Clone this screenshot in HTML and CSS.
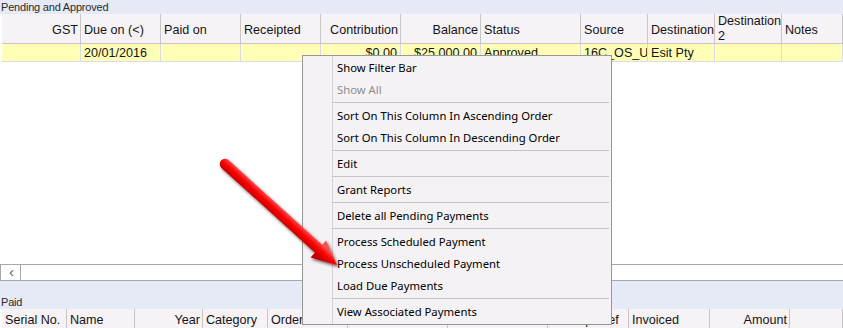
FILE: index.html
```html
<!DOCTYPE html>
<html lang="en">
<head>
    <meta charset="UTF-8">
    <title>Payments</title>
    <link rel="stylesheet" href="styles.css">
</head>
<body>
    <div class="caption">Pending and Approved</div>

    <div class="grid pending">
        <div class="head top-cols">
            <div class="c r">GST</div>
            <div class="c">Due on (&lt;)</div>
            <div class="c">Paid on</div>
            <div class="c">Receipted</div>
            <div class="c r">Contribution</div>
            <div class="c r">Balance</div>
            <div class="c">Status</div>
            <div class="c">Source</div>
            <div class="c">Destination</div>
            <div class="c two">Destination<br>2</div>
            <div class="c">Notes</div>
        </div>
        <div class="row top-cols">
            <div class="c"></div>
            <div class="c">20/01/2016</div>
            <div class="c"></div>
            <div class="c"></div>
            <div class="c r">$0.00</div>
            <div class="c r">$25,000.00</div>
            <div class="c">Approved</div>
            <div class="c">16C_OS_University</div>
            <div class="c">Esit Pty</div>
            <div class="c"></div>
            <div class="c"></div>
        </div>
        <div class="blank"></div>
        <div class="hscroll">
            <span class="scroll-btn">&lsaquo;</span>
        </div>
    </div>

    <div class="band"></div>
    <div class="caption">Paid</div>

    <div class="grid">
        <div class="head paid-cols">
            <div class="c">Serial No.</div>
            <div class="c">Name</div>
            <div class="c r">Year</div>
            <div class="c">Category</div>
            <div class="c">Order</div>
            <div class="c"></div>
            <div class="c"></div>
            <div class="c ref">Receipt Ref</div>
            <div class="c">Invoiced</div>
            <div class="c r">Amount</div>
            <div class="c"></div>
        </div>
    </div>

    <!-- context menu -->
    <ul class="menu">
        <li>Show Filter Bar</li>
        <li class="off">Show All</li>
        <li class="sep"></li>
        <li>Sort On This Column In Ascending Order</li>
        <li>Sort On This Column In Descending Order</li>
        <li class="sep"></li>
        <li>Edit</li>
        <li class="sep"></li>
        <li>Grant Reports</li>
        <li class="sep"></li>
        <li>Delete all Pending Payments</li>
        <li class="sep"></li>
        <li>Process Scheduled Payment</li>
        <li>Process Unscheduled Payment</li>
        <li>Load Due Payments</li>
        <li class="sep"></li>
        <li>View Associated Payments</li>
    </ul>

    <svg class="pointer" width="843" height="328" viewBox="0 0 843 328">
        <defs>
            <linearGradient id="red" gradientUnits="userSpaceOnUse" x1="274" y1="200.6" x2="266" y2="209.4">
                <stop offset="0" stop-color="#ff5050"/>
                <stop offset="0.45" stop-color="#ff0000"/>
                <stop offset="1" stop-color="#c00000"/>
            </linearGradient>
            <filter id="shadow" x="-20%" y="-20%" width="140%" height="140%">
                <feDropShadow dx="1.5" dy="2" stdDeviation="1.6" flood-color="#300" flood-opacity="0.65"/>
            </filter>
        </defs>
        <g filter="url(#shadow)" fill="url(#red)">
            <line x1="225" y1="164" x2="320" y2="250" stroke="url(#red)" stroke-width="10.5" stroke-linecap="round"/>
            <polygon points="337,265 310.5,257.5 326,240.5"/>
        </g>
    </svg>
</body>
</html>
```

FILE: styles.css
```css
body {
    margin: 0;
    width: 843px;
    height: 328px;
    overflow: hidden;
    position: relative;
    background: #e6eaf6;
    font-family: "Liberation Sans", Arial, sans-serif;
    color: #151515;
}
.caption {
    height: 14px;
    line-height: 14px;
    padding-left: 1px;
    font-size: 11px;
    letter-spacing: -0.2px;
    color: #2a2a2a;
    overflow: hidden;
}
.grid {
    background: #fff;
    padding-left: 2px;
}
.pending {
    height: 267px;
    display: flex;
    flex-direction: column;
}
.top-cols {
    display: grid;
    grid-template-columns: 79px 80px 80px 80px 80px 80px 100px 67px 67px 67px 1fr;
}
.paid-cols {
    display: grid;
    grid-template-columns: 65px 68px 68px 65px 80px 100px 100px 81px 81px 80px 1fr;
}
.c {
    box-sizing: border-box;
    padding: 0 3px;
    font-size: 12.6px;
    white-space: nowrap;
    overflow: hidden;
}
.head {
    height: 30px;
    background: #f6f2f6;
    border-bottom: 1px solid #c8c4c8;
    box-sizing: border-box;
}
.paid-cols.head {
    height: 20px;
}
.head .c {
    display: flex;
    align-items: center;
    padding-top: 2px;
    border-right: 1px solid #c8c4c8;
}
.head .c.r {
    justify-content: flex-end;
    padding-right: 2px;
}
.head .c.ref {
    padding-left: 5px;
}
.head .c.two {
    line-height: 15px;
    padding-top: 0;
}
.row {
    height: 18px;
    background: #ffffb5;
    border-bottom: 1px solid #dadde7;
    box-sizing: border-box;
}
.row .c {
    line-height: 18px;
    border-right: 1px solid #dadde7;
}
.row .c.r {
    text-align: right;
    padding-right: 3px;
}
.blank {
    flex: 1;
}
.hscroll {
    height: 17px;
    box-sizing: border-box;
    border-top: 1px solid #a8a8a8;
    border-bottom: 1px solid #a8a8a8;
    border-left: 1px solid #a8a8a8;
    margin-left: -2px;
    display: flex;
}
.scroll-btn {
    width: 18px;
    box-sizing: border-box;
    border-right: 1px solid #a8a8a8;
    margin-left: 2px;
    text-align: center;
    line-height: 13px;
    font-size: 15px;
    color: #606060;
}
.band {
    height: 14px;
}
.menu {
    position: absolute;
    left: 302px;
    top: 55px;
    width: 310px;
    margin: 0;
    padding: 1px 0;
    list-style: none;
    box-sizing: border-box;
    border: 1px solid #979797;
    background: linear-gradient(to right, transparent 29px, #d4d0d4 29px, #d4d0d4 30px, transparent 30px), #f5f2f5;
    font-family: "Noto Sans", sans-serif;
    font-size: 11.3px;
    color: #000;
}
.menu li {
    height: 22px;
    line-height: 22px;
    padding-left: 34px;
    white-space: nowrap;
}
.menu li.off {
    color: #8d8d8d;
}
.menu li.sep {
    height: 1px;
    padding: 0;
    margin: 1px 2px 2px 29px;
    background: #c6c2c6;
}
.pointer {
    position: absolute;
    left: 0;
    top: 0;
    pointer-events: none;
}
```
